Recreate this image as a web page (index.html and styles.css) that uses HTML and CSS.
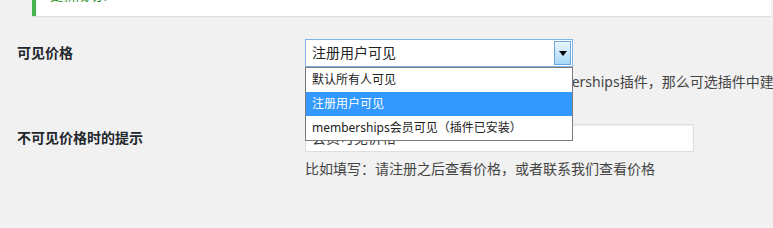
FILE: index.html
```html
<!DOCTYPE html>
<html lang="zh-CN">
<head>
<meta charset="utf-8">
<title>设置</title>
<link rel="stylesheet" href="styles.css">
</head>
<body>
<div class="notice"><p>更新成功！</p></div>
<div class="form">
  <div class="row row-first">
    <div class="label">可见价格</div>
    <div class="field">
      <div class="select-wrap">
        <div class="select">
          <span class="select-text">注册用户可见</span>
          <span class="select-btn"><svg width="8" height="5" viewBox="0 0 8 5"><path d="M0 0H8L4 5Z" fill="#000"/></svg></span>
        </div>
        <ul class="dropdown">
          <li>默认所有人可见</li>
          <li class="active">注册用户可见</li>
          <li>memberships会员可见（插件已安装）</li>
        </ul>
      </div>
      <p class="desc">如果您的网站已经安装并且启用了该memberships插件，那么可选插件中建立的会员等级可见价格。</p>
    </div>
  </div>
  <div class="row">
    <div class="label">不可见价格时的提示</div>
    <div class="field">
      <div class="input">会员可见价格</div>
      <p class="desc desc-help">比如填写：请注册之后查看价格，或者联系我们查看价格</p>
    </div>
  </div>
</div>
</body>
</html>
```
FILE: styles.css
```css
html, body {
  margin: 0;
  padding: 0;
  background: #f1f1f1;
  overflow: hidden;
}
body {
  font-family: "Noto Sans", "Noto Sans CJK SC", sans-serif;
  font-size: 14px;
  color: #444;
}
.notice {
  margin: -20px 2px 0 32px;
  background: #fff;
  border-left: 4px solid #46b450;
  box-shadow: 0 1px 1px rgba(0,0,0,0.08);
  height: 36px;
  overflow: hidden;
}
.notice p {
  margin: 0;
  padding: 6px 0 0 14px;
  line-height: 18px;
  font-size: 13px;
  color: #1c8c1c;
}
.form {
  margin-top: 8px;
  padding-left: 17px;
}
.row {
  display: grid;
  grid-template-columns: 288px 1fr;
}
.label {
  padding-top: 20px;
  font-weight: 700;
  font-size: 14px;
  line-height: 18px;
  color: #23282d;
}
.field {
  padding: 15px 0 15px;
  min-width: 0;
}
.row-first .field {
  padding-bottom: 17px;
}
.select-wrap {
  position: relative;
  width: 268px;
}
.select {
  box-sizing: border-box;
  height: 28px;
  border: 1px solid #7eb4ea;
  background: #fff;
  display: flex;
  align-items: center;
  justify-content: space-between;
  padding-left: 6px;
}
.select-text {
  font-size: 14px;
  color: #222;
  line-height: 18px;
}
.select-btn {
  box-sizing: border-box;
  width: 17px;
  height: 24px;
  margin-right: 1px;
  border: 1px solid #6ca8dd;
  background: linear-gradient(#eaf6fd, #a7d8f6);
  display: flex;
  align-items: center;
  justify-content: center;
}
.dropdown {
  position: absolute;
  top: 28px;
  left: 0;
  width: 268px;
  box-sizing: border-box;
  margin: 0;
  padding: 0;
  list-style: none;
  border: 1px solid #7a7a7a;
  background: #fff;
  z-index: 2;
}
.dropdown li {
  height: 24px;
  line-height: 24px;
  padding-left: 6px;
  font-size: 12px;
  color: #222;
  white-space: nowrap;
}
.dropdown li.active {
  background: #3399ff;
  color: #fff;
}
.desc {
  margin: 5px 0 0;
  line-height: 20px;
  white-space: nowrap;
  color: #444;
}
.desc-help {
  margin-top: 7px;
}
.input {
  box-sizing: border-box;
  width: 389px;
  height: 28px;
  border: 1px solid #ddd;
  background: #fff;
  box-shadow: inset 0 1px 2px rgba(0,0,0,0.07);
  padding-left: 6px;
  line-height: 26px;
  font-size: 14px;
  color: #333;
}
```
